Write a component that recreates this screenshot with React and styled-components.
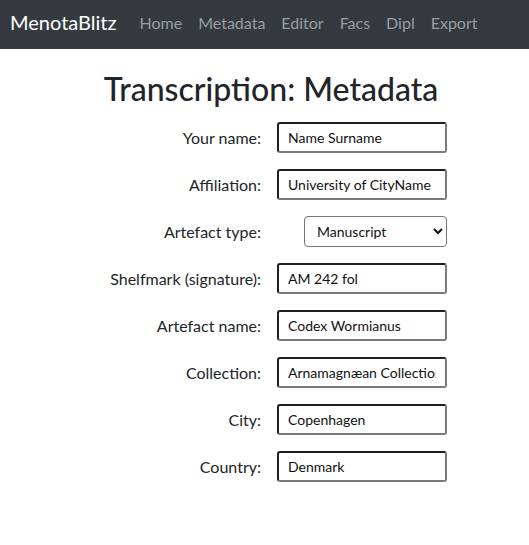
import React from 'react';
import styled, { createGlobalStyle } from 'styled-components';

const GlobalStyle = createGlobalStyle`
    body {
        margin: 0;
        background: #fff;
        font-family: 'Lato', 'Noto Sans', sans-serif;
        color: #212529;
    }
`;

const Navbar = styled.nav`
    display: flex;
    align-items: center;
    box-sizing: border-box;
    height: 49px;
    padding: 0 10px 5px;
    background-color: #343a40;
`;

const Brand = styled.a`
    font-size: 20px;
    color: #fff;
    margin-right: 23px;
`;

const NavLinks = styled.div`
    display: flex;
    gap: 16px;
`;

const NavLink = styled.a`
    font-size: 16px;
    color: #9a9da1;
`;

const Main = styled.main`
    padding-top: 21px;
`;

const Title = styled.h2`
    margin: 0 0 14px;
    padding-left: 13px;
    text-align: center;
    font-size: 32px;
    font-weight: 500;
    line-height: 1.2;
    color: #212529;
`;

const Form = styled.form`
    display: grid;
    grid-template-columns: 261px 170px;
    column-gap: 16px;
    row-gap: 16px;
    align-items: center;
`;

const Label = styled.label`
    text-align: right;
    font-size: 16px;
    color: #212529;
`;

const Field = styled.div`
    display: flex;
    justify-content: flex-end;
`;

const TextInput = styled.input`
    box-sizing: border-box;
    width: 170px;
    height: 31px;
    padding: 0 9px;
    border: 2px solid;
    border-color: #1f1f1f #7a7a7a #7a7a7a #1f1f1f;
    border-radius: 3px;
    font-family: 'Lato', 'Noto Sans', sans-serif;
    font-size: 14px;
    color: #111;
    background: #fff;
    outline: none;
`;

const Select = styled.select`
    box-sizing: border-box;
    width: 143px;
    height: 31px;
    padding: 0 8px;
    border: 1px solid #767676;
    border-radius: 4px;
    font-family: 'Lato', 'Noto Sans', sans-serif;
    font-size: 14px;
    color: #111;
    background: #fff;
`;

const fields = [
    { label: 'Your name:', value: 'Name Surname' },
    { label: 'Affiliation:', value: 'University of CityName' },
    { label: 'Artefact type:', select: ['Manuscript', 'Charter', 'Inscription'] },
    { label: 'Shelfmark (signature):', value: 'AM 242 fol' },
    { label: 'Artefact name:', value: 'Codex Wormianus' },
    { label: 'Collection:', value: 'Arnamagnæan Collection' },
    { label: 'City:', value: 'Copenhagen' },
    { label: 'Country:', value: 'Denmark' },
];

const App = () => {
    return (
        <>
            <GlobalStyle />
            <Navbar>
                <Brand>MenotaBlitz</Brand>
                <NavLinks>
                    <NavLink>Home</NavLink>
                    <NavLink>Metadata</NavLink>
                    <NavLink>Editor</NavLink>
                    <NavLink>Facs</NavLink>
                    <NavLink>Dipl</NavLink>
                    <NavLink>Export</NavLink>
                </NavLinks>
            </Navbar>
            <Main>
                <Title>Transcription: Metadata</Title>
                <Form>
                    {fields.map((f) => (
                        <React.Fragment key={f.label}>
                            <Label>{f.label}</Label>
                            <Field>
                                {f.select ? (
                                    <Select defaultValue={f.select[0]}>
                                        {f.select.map((o) => (
                                            <option key={o}>{o}</option>
                                        ))}
                                    </Select>
                                ) : (
                                    <TextInput defaultValue={f.value} />
                                )}
                            </Field>
                        </React.Fragment>
                    ))}
                </Form>
            </Main>
        </>
    );
};

export default App;
